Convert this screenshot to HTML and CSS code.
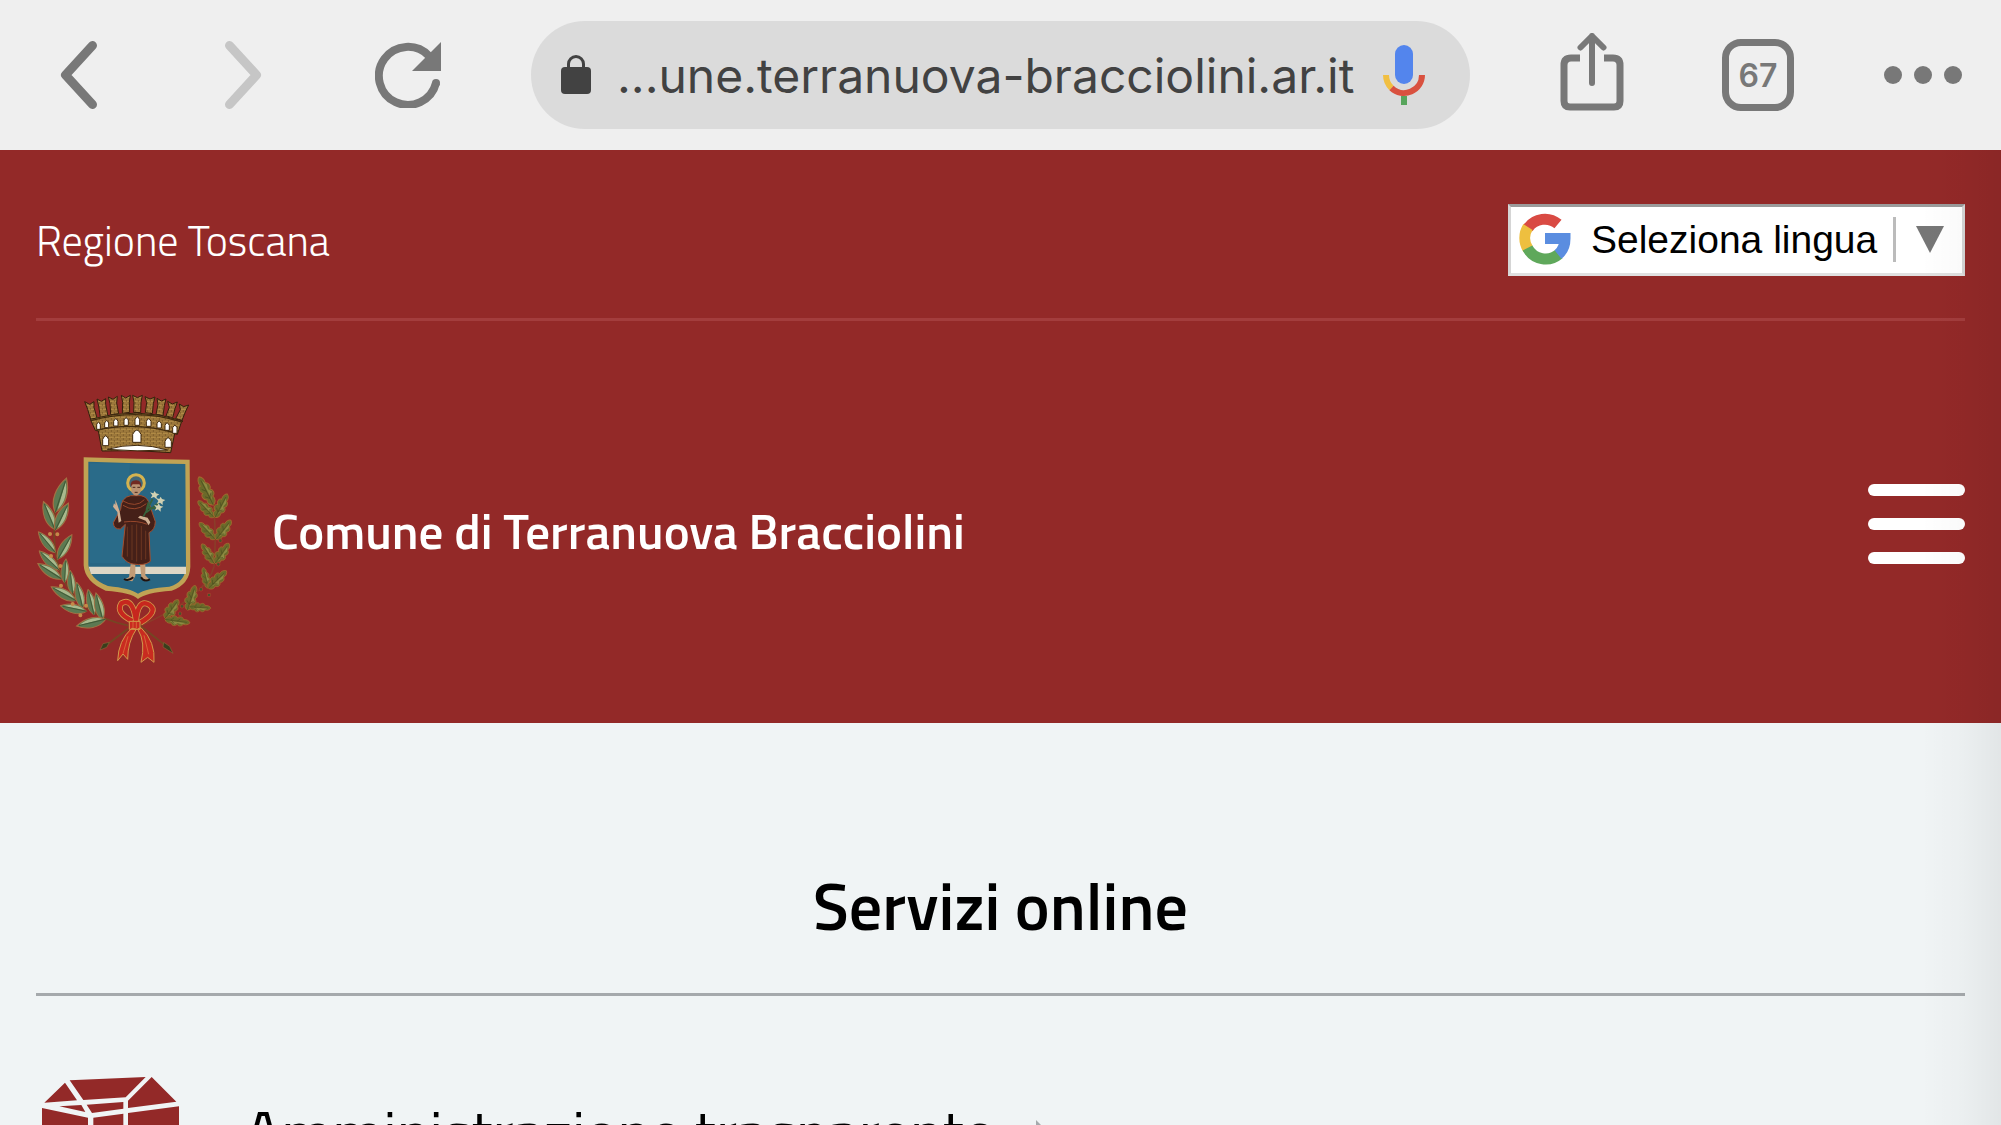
FILE: index.html
```html
<!DOCTYPE html>
<html lang="it">

<head>
    <meta charset="UTF-8">
    <meta name="viewport" content="width=device-width, initial-scale=1.0">
    <title>Comune di Terranuova Bracciolini</title>
    <link rel="stylesheet" href="styles.css">
</head>

<body>
    <nav class="toolbar">
        <div class="nav-buttons">
            <button type="button" aria-label="Indietro">
                <svg width="38" height="70" viewBox="0 0 38 70"><path d="M32.5 5.500 L5.500 35 L32.500 64.500" fill="none" stroke="#787878" stroke-width="9" stroke-linecap="round" stroke-linejoin="round"/></svg>
            </button>
            <button type="button" class="off" aria-label="Avanti">
                <svg width="38" height="70" viewBox="0 0 38 70"><path d="M5.500 5.500 L32.500 35 L5.500 64.500" fill="none" stroke="#c6c6c6" stroke-width="9" stroke-linecap="round" stroke-linejoin="round"/></svg>
            </button>
            <button type="button" aria-label="Ricarica">
                <svg width="66" height="66" viewBox="0 0 66 66">
                    <path d="M54 14 A29 29 0 1 0 61 41" fill="none" stroke="#787878" stroke-width="8"/>
                    <circle cx="61" cy="41" r="4" fill="#787878"/>
                    <path d="M66 0 V29 H37Z" fill="#787878"/>
                </svg>
            </button>
        </div>

        <div class="address">
            <svg width="30" height="40" viewBox="0 0 30 40">
                <rect y="12" width="30" height="27" rx="4" fill="#424242"/>
                <path d="M7.500 14 V9 a7.500 7.500 0 0 1 15 0 V14" fill="none" stroke="#424242" stroke-width="3"/>
            </svg>
            <input type="text" aria-label="Indirizzo" value="...une.terranuova-bracciolini.ar.it" readonly>
            <button type="button" aria-label="Ricerca vocale">
                <svg width="42" height="60" viewBox="0 0 42 60">
                    <rect x="12" width="18" height="39" rx="9" fill="#5385ed"/>
                    <path d="M3 30 A18 18 0 0 0 8.500 43" fill="none" stroke="#f1bf42" stroke-width="6"/>
                    <path d="M8.500 43 A18 18 0 0 0 39 30" fill="none" stroke="#d9513f" stroke-width="6"/>
                    <path d="M18 51 h6 v9 h-6z" fill="#58a55c"/>
                </svg>
            </button>
        </div>

        <div class="tools">
            <button type="button" class="share" aria-label="Condividi">
                <svg width="64" height="78" viewBox="0 0 64 78" fill="none" stroke="#787878">
                    <path d="M20 25 H11 Q4 25 4 32 V68 Q4 74 10 74 H54 Q60 74 60 68 V32 Q60 25 53 25 H44" stroke-width="7"/>
                    <path d="M32 50 V3 M20.500 14.500 L32 3 L43.500 14.500" stroke-width="6" stroke-linecap="round" stroke-linejoin="round"/>
                </svg>
            </button>
            <button type="button" class="tabs" aria-label="Schede aperte">67</button>
            <button type="button" aria-label="Altro">
                <svg width="78" height="18" viewBox="0 0 78 18" fill="#787878"><circle cx="9" cy="9" r="9"/><circle cx="39" cy="9" r="9"/><circle cx="69" cy="9" r="9"/></svg>
            </button>
        </div>
    </nav>

    <div class="page">
        <header>
            <div class="header-top">
                <a href="#">Regione Toscana</a>
                <div class="language">
                    <svg width="52" height="54" viewBox="0 0 52 54" fill="none" stroke-width="11">
                        <path d="M39 13 A20.500 20.500 0 0 0 9 17" stroke="#d94a43"/>
                        <path d="M9 16 A20.500 20.500 0 0 0 9 38" stroke="#eebf3f"/>
                        <path d="M8.500 37 A20.500 20.500 0 0 0 40 43" stroke="#5fa85b"/>
                        <path d="M26 27.500 H46 Q46 38 39 43.500" stroke="#5a8de0"/>
                    </svg>
                    <select aria-label="Seleziona lingua">
                        <option>Seleziona lingua</option>
                    </select>
                    <span class="arrow"></span>
                </div>
            </div>

            <div class="header-main">
                <a class="brand" href="#">
                    <svg width="200" height="272" viewBox="48 66 600 816" aria-hidden="true">
                        <defs>
                            <g id="leaf">
                                <path d="M0 0 C-22 -22 -18 -62 0 -90 C18 -60 20 -24 0 0Z" fill="#5c7a52" stroke="#a47042" stroke-width="3"/>
                                <path d="M3 -8 C16 -28 13 -60 1 -80Z" fill="#a9b98d"/>
                                <path d="M0 0 L0 -82" stroke="#3f5a36" stroke-width="3"/>
                            </g>
                            <g id="oak">
                                <path d="M0 0 C-12 -4 -17 -13 -11 -20 C-25 -25 -23 -39 -14 -41 C-24 -50 -19 -63 -10 -62 C-14 -73 -7 -84 0 -86 C8 -82 14 -73 10 -64 C20 -61 23 -49 14 -43 C25 -37 23 -25 12 -22 C17 -12 11 -3 0 0Z" fill="#6b6a2a" stroke="#a3682e" stroke-width="3"/>
                                <path d="M4 -12 L3 -72 L12 -58 L8 -45 L17 -34 L8 -26Z" fill="#8c8a42"/>
                                <path d="M0 0 V-75 M0 -20 L-12 -30 M0 -42 L-11 -52 M0 -22 L12 -33" fill="none" stroke="#474c1f" stroke-width="2"/>
                            </g>
                            <pattern id="brick" width="18" height="12" patternUnits="userSpaceOnUse">
                                <rect width="18" height="12" fill="#b08a45"/>
                                <path d="M0 0 H18 M0 6 H18 M4 0 V6 M13 6 V12" stroke="#60421a" stroke-width="1.500"/>
                            </pattern>
                        </defs>

                        <!-- corona muraria -->
                        <g stroke="#33210c" stroke-width="3" fill="url(#brick)">
                            <path d="M194 95 L209 103 L222 95 L222 112 L231 144 L212 148 L203 118Z"/>
                            <path d="M231 87 L244 94 L257 86 L257 103 L264 139 L241 142 L236 108Z"/>
                            <path d="M265 81 L279 88 L292 79 L290 99 L296 131 L272 134 L270 101Z"/>
                            <path d="M304 76 L317 84 L331 76 L328 97 L329 127 L307 130 L308 97Z"/>
                            <path d="M338 76 L352 83 L367 76 L363 97 L362 128 L341 127 L342 97Z"/>
                            <path d="M375 80 L390 87 L405 81 L400 101 L397 131 L376 128 L380 98Z"/>
                            <path d="M411 85 L424 93 L438 87 L433 107 L429 137 L408 133 L414 103Z"/>
                            <path d="M443 94 L457 102 L472 96 L465 116 L458 143 L438 138 L448 112Z"/>
                            <path d="M478 102 L491 110 L506 105 L496 126 L486 151 L467 146 L481 119Z"/>
                            <path d="M211 148 Q352 108 489 153 L484 157 L472 193 L464 191 L452 248 Q350 238 246 243 L235 183 L226 181Z"/>
                        </g>
                        <path d="M213 152 Q352 114 486 156 M228 181 Q348 153 472 191" fill="none" stroke="#402a0d" stroke-width="4"/>
                        <g fill="#fff" stroke="#40290d" stroke-width="3">
                            <path d="M230 178 V164 Q235 149 241 164 V178Z M254 173 V159 Q260 145 266 159 V173Z M281 168 V154 Q287 139 294 154 V168Z M312 166 V150 Q318 137 325 150 V166Z M345 166 V149 Q352 132 359 149 V166Z M379 169 V154 Q386 139 393 154 V169Z M411 174 V161 Q417 145 424 161 V174Z M435 181 V166 Q441 151 448 166 V181Z M458 190 V173 Q465 159 471 173 V190Z"/>
                            <path d="M248 227 V208 Q257 187 266 208 V227Z M338 217 V193 Q351 167 363 193 V217Z M435 232 V214 Q444 192 454 214 V232Z"/>
                            <path d="M262 238 Q350 213 443 240 Q350 246 262 238Z"/>
                        </g>

                        <!-- scudo -->
                        <path d="M191 262 Q350 268 509 269 L511 590 Q509 643 455 662 Q375 668 354 687 Q334 667 257 662 Q194 635 191 586Z" fill="#c0a354"/>
                        <path d="M205 275 Q350 281 496 282 L498 590 Q495 636 448 650 Q377 655 354 671 Q331 655 264 648 Q208 626 205 584Z" fill="#286683"/>
                        <path d="M210 280 H330 L315 580 H210Z" fill="#2d7290" opacity=".45"/>
                        <path d="M206 590 H498 V612 H213Z" fill="#ddd6c5"/>

                        <!-- santo -->
                        <circle cx="348" cy="339" r="25" fill="#426777" stroke="#d5b34f" stroke-width="9"/>
                        <path d="M332 583 L327 621 L312 630 L337 634 L346 618 V583Z M360 583 L364 620 L376 634 L390 631 L376 616 V583Z" fill="#c29b75"/>
                        <path d="M312 627 Q325 635 340 622 M363 622 Q371 637 390 628" fill="none" stroke="#20120e" stroke-width="6"/>
                        <path d="M332 377 Q303 382 302 418 L280 458 Q281 478 301 477 L316 463 L306 559 Q320 580 340 582 Q373 588 391 574 L387 488 Q405 480 406 455 L389 405 Q383 380 363 377Z" fill="#452018" stroke="#a34e2e" stroke-width="3"/>
                        <path d="M312 456 Q350 450 382 463 M309 406 Q345 429 379 401 M307 392 Q348 416 373 389" fill="none" stroke="#97472b" stroke-width="3"/>
                        <path d="M322 470 V560 M336 465 V570 M350 463 V575 M364 468 V570 M377 482 V568" stroke="#6b3621" stroke-width="3"/>
                        <path d="M296 458 L292 426 L279 410 L282 400 L286 405 V389 L292 404 L299 425 L304 453Z M386 466 L377 452 L354 443 L360 437 L383 443 L391 457Z" fill="#d1b093"/>
                        <path d="M334 342 Q348 330 362 342 V365 Q348 388 334 366Z" fill="#ba9272"/>
                        <path d="M332 350 Q330 330 349 331 Q366 332 364 353 L358 343 H338Z" fill="#722a22"/>
                        <path d="M338 352 h8 M352 352 h8 M344 367 h9" stroke="#49271b" stroke-width="3"/>
                        <path d="M370 440 L398 387 M378 428 L416 399 M384 413 L411 416 M379 420 L386 395" fill="none" stroke="#38623c" stroke-width="5"/>
                        <g fill="#d2d1b2">
                            <path id="flower" d="M404 363 L408 370 L418 373 L410 378 L410 388 L402 381 L392 385 L397 376 L390 367 L400 370Z"/>
                            <use href="#flower" x="18" y="17"/>
                            <use href="#flower" x="12" y="37"/>
                        </g>

                        <!-- alloro -->
                        <path d="M106 420 Q93 530 125 620 Q180 737 325 767" fill="none" stroke="#754623" stroke-width="5"/>
                        <use href="#leaf" transform="translate(106 427) rotate(18) scale(1.200)"/>
                        <use href="#leaf" transform="translate(104 478) rotate(-22)"/>
                        <use href="#leaf" transform="translate(106 480) rotate(26)"/>
                        <use href="#leaf" transform="translate(106 548) rotate(-39) scale(.9)"/>
                        <use href="#leaf" transform="translate(113 568) rotate(30) scale(.95)"/>
                        <use href="#leaf" transform="translate(117 600) rotate(-46) scale(.92)"/>
                        <use href="#leaf" transform="translate(125 627) rotate(-57) scale(.95)"/>
                        <use href="#leaf" transform="translate(133 638) rotate(4) scale(.8)"/>
                        <use href="#leaf" transform="translate(158 672) rotate(-6) scale(.8)"/>
                        <use href="#leaf" transform="translate(168 692) rotate(-61) scale(.95)"/>
                        <use href="#leaf" transform="translate(188 715) rotate(-13) scale(.9)"/>
                        <use href="#leaf" transform="translate(200 724) rotate(-78) scale(.9)"/>
                        <use href="#leaf" transform="translate(222 735) rotate(-13) scale(.88)"/>
                        <use href="#leaf" transform="translate(248 750) rotate(-14) scale(.93)"/>
                        <use href="#leaf" transform="translate(257 748) rotate(-103)"/>
                        <path d="M90 492h.1M112 493h.1M93 558h.1M121 588h.1M123 647h.1M158 702h.1M181 736h.1M198 707h.1" stroke="#c48a49" stroke-width="12" stroke-linecap="round"/>

                        <!-- quercia -->
                        <path d="M580 400 Q590 500 582 590 Q560 680 360 768" fill="none" stroke="#8a3d29" stroke-width="5"/>
                        <use href="#oak" transform="translate(580 405) rotate(-27) scale(.9 1.100)"/>
                        <use href="#oak" transform="translate(582 442) rotate(-44) scale(.7 .8)"/>
                        <use href="#oak" transform="translate(585 442) rotate(28) scale(.8 .92)"/>
                        <use href="#oak" transform="translate(585 508) rotate(-43) scale(.7 .8)"/>
                        <use href="#oak" transform="translate(588 508) rotate(38) scale(.8 .85)"/>
                        <use href="#oak" transform="translate(582 580) rotate(-32) scale(.7 .8)"/>
                        <use href="#oak" transform="translate(585 580) rotate(35) scale(.8 .85)"/>
                        <use href="#oak" transform="translate(565 655) rotate(-14) scale(.6 .75)"/>
                        <use href="#oak" transform="translate(565 655) rotate(46) scale(.8 .88)"/>
                        <use href="#oak" transform="translate(502 720) rotate(18) scale(.8 .9)"/>
                        <use href="#oak" transform="translate(508 710) rotate(94) scale(.65 .75)"/>
                        <use href="#oak" transform="translate(435 745) rotate(36) scale(.8)"/>
                        <use href="#oak" transform="translate(435 748) rotate(98) scale(.7 .88)"/>
                        <path d="M601 512h.1M595 583h.1M567 675h.1M543 658h.1M486 709h.1M480 731h.1" stroke="#a53c2b" stroke-width="13" stroke-linecap="round"/>
                        <path d="M601 512h.1M595 583h.1M567 675h.1M543 658h.1M486 709h.1M480 731h.1" stroke="#48532a" stroke-width="8" stroke-linecap="round"/>

                        <!-- nastro -->
                        <path d="M325 776 L254 829 M361 767 L446 834" stroke="#754523" stroke-width="6"/>
                        <path d="M240 840 L249 821 L268 817 L260 832Z M459 850 L429 831 L431 817 L449 829Z" fill="#383e1d" stroke="#8a6435" stroke-width="2"/>
                        <path d="M337 753 Q286 728 304 700 Q338 680 348 753 Q354 685 387 704 Q418 724 361 758" fill="none" stroke="#d29a4b" stroke-width="18" stroke-linejoin="round"/>
                        <path d="M337 753 Q286 728 304 700 Q338 680 348 753 Q354 685 387 704 Q418 724 361 758" fill="none" stroke="#c7271e" stroke-width="13" stroke-linejoin="round"/>
                        <path d="M335 775 Q295 811 293 872 L309 852 L323 868 Q323 816 349 777Z M353 777 Q378 817 363 877 L383 862 L402 877 Q407 815 363 773Z M328 754 H360 V778 H328Z" fill="#c92b20" stroke="#d29a4b" stroke-width="3"/>
                        <path d="M324 799 L309 851 M372 796 L386 853 M339 756 V775 M349 756 V775" stroke="#df8044" stroke-width="2"/>
                    </svg>
                    <span>Comune di Terranuova Bracciolini</span>
                </a>
                <button type="button" class="hamburger" aria-label="Menu">
                    <span></span>
                    <span></span>
                    <span></span>
                </button>
            </div>
        </header>

        <main>
            <h2>Servizi online</h2>
            <a class="service" href="#">
                <svg width="137" height="150" viewBox="126 111 411 450" fill="#932928">
                    <path d="M209 121 L437 111 L377 172 L250 180Z M195 128 L231 181 L133 188Z M455 111 L529 185 L384 204 V182Z M178 199 L244 195 L256 216Z M260 194 L370 186 V206 L276 219Z"/>
                    <path d="M126 204 L264 233 V561 L126 500Z M280 233 L370 221 V561 H280Z M384 219 L537 199 V500 L384 561Z"/>
                </svg>
                <span>Amministrazione trasparente</span>
                <svg width="18" height="30" viewBox="0 0 18 30"><path d="M0 0 L15 15 L0 30Z" fill="#a5a9ac"/></svg>
            </a>
        </main>
        <div class="edge-shadow"></div>
    </div>
</body>

</html>
```

FILE: styles.css
```css
* {
    box-sizing: border-box;
}

body {
    margin: 0;
    height: 100vh;
    overflow: hidden;
    display: flex;
    flex-direction: column;
    background-color: #f0f4f5;
    font-family: "Titillium Web", Roboto, sans-serif;
}

a {
    color: inherit;
    text-decoration: none;
}

button {
    display: flex;
    padding: 0;
    border: 0;
    background: none;
    cursor: pointer;
}

svg {
    display: block;
    flex: none;
}

/* browser bar */
.toolbar {
    flex: none;
    display: flex;
    align-items: center;
    height: 150px;
    padding: 0 39px 0 60px;
    background-color: #efefef;
    font-family: Inter, sans-serif;
}

.nav-buttons {
    display: flex;
    align-items: center;
    gap: 113px;
    margin-right: 90px;
}

.nav-buttons .off {
    margin: 0 0 0 13px;
}

.address {
    flex: 1;
    min-width: 0;
    display: flex;
    align-items: center;
    height: 108px;
    padding: 0 45px 0 30px;
    border-radius: 54px;
    background-color: #dbdbdb;
}

.address input {
    flex: 1;
    min-width: 0;
    margin: 0 20px 0 26px;
    padding: 0;
    border: 0;
    background: none;
    color: #424242;
    font-family: inherit;
    font-size: 48px;
}

.tools {
    display: flex;
    align-items: center;
    gap: 90px;
    margin-left: 90px;
}

.share {
    margin: 0 8px 6px 0;
}

.tabs {
    align-items: center;
    justify-content: center;
    width: 72px;
    height: 72px;
    border: 7px solid #787878;
    border-radius: 19px;
    color: #787878;
    font-family: inherit;
    font-size: 32px;
    font-weight: 600;
}

/* site header */
.page {
    position: relative;
    flex: 1;
    min-height: 0;
}

header {
    padding: 0 36px;
    background-color: #932928;
    color: white;
}

.header-top {
    display: flex;
    justify-content: space-between;
    align-items: center;
    height: 171px;
    padding-top: 12px;
    border-bottom: 3px solid #a33d3d;
    font-size: 42px;
    font-weight: 300;
}

.language {
    display: flex;
    align-items: center;
    height: 72px;
    padding-left: 8px;
    border: 3px solid #d5d5d5;
    border-top-color: #9b9b9b;
    border-bottom-color: #e0e0e0;
    background-color: white;
}

.language svg {
    margin-bottom: 5px;
}

.language select {
    appearance: none;
    margin: 0 0 2px 20px;
    padding: 0 15px 0 0;
    height: 45px;
    border: 0;
    border-right: 3px solid #bbbbbb;
    border-radius: 0;
    background: none;
    color: black;
    font-family: "Liberation Sans", sans-serif;
    font-size: 39px;
}

.arrow {
    margin: 0 18px 2px 20px;
    border: 14px solid transparent;
    border-top: 27px solid #767676;
    border-bottom: 0;
}

.header-main {
    display: flex;
    justify-content: space-between;
    align-items: center;
    padding: 71px 0 59px;
}

.brand {
    display: flex;
    align-items: center;
    gap: 36px;
    font-size: 49px;
    font-weight: 600;
}

.brand span {
    padding-top: 5px;
}

.hamburger {
    flex-direction: column;
    gap: 22px;
    padding-bottom: 9px;
}

.hamburger span {
    width: 97px;
    height: 12px;
    border-radius: 6px;
    background-color: white;
}

/* services */
main {
    padding: 0 36px;
}

h2 {
    margin: 0;
    padding: 142px 0 46px;
    border-bottom: 3px solid #a5a9ac;
    color: black;
    font-size: 66px;
    line-height: 82px;
    font-weight: 600;
    text-align: center;
}

.service {
    display: flex;
    align-items: flex-start;
    padding: 81px 6px 0;
    color: black;
    font-size: 61px;
    line-height: 66px;
}

.service span {
    margin: 22px 41px 0 66px;
}

.service svg:last-child {
    margin-top: 43px;
}

.edge-shadow {
    position: absolute;
    top: 0;
    right: 0;
    bottom: 0;
    width: 80px;
    background: linear-gradient(to right, rgba(0, 0, 0, 0), rgba(0, 0, 0, 0.02) 50%, rgba(0, 0, 0, 0.06));
    pointer-events: none;
}
```
